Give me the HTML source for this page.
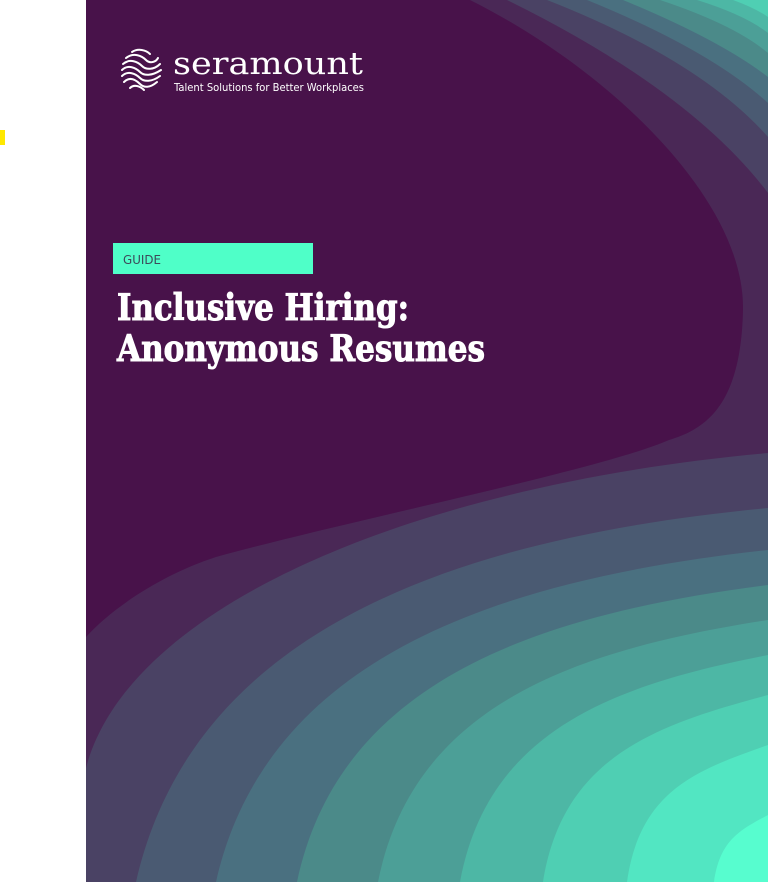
<!DOCTYPE html>
<html><head><meta charset="utf-8"><style>
html,body{margin:0;padding:0;background:#fff;width:768px;height:882px;overflow:hidden}
svg{position:absolute;left:0;top:0}
</style></head><body>
<svg width="768" height="882" viewBox="0 0 768 882" xmlns="http://www.w3.org/2000/svg">
<rect x="0" y="130" width="5" height="15" fill="#ffe800"/>
<rect x="86" y="0" width="682" height="882" fill="#48124a"/>
<g>
<path fill="#4a2856" d="M470,0 C610,70 745,200 743,310 C741,400 710,428 669,440 C600,470 350,520 216,557 C160,575 110,610 86,637 L86,900 L800,900 L800,-10 L470,-10 Z"/>
<path fill="#4a4264" d="M507,0 Q690,90 768,193 L800,193 L800,453 L768,453 C430,483 130,600 86,768 L86,900 L800,900 L800,-10 L507,-10 Z"/>
<path fill="#4a5a72" d="M547,0 Q700,60 768,137 L800,137 L800,508 L768,508 C452,538 193,631 136,882 L800,900 L800,-10 L547,-10 Z"/>
<path fill="#4a7080" d="M587,0 Q710,50 768,103 L800,103 L800,550 L768,550 C492,580 266,660 216,882 L800,900 L800,-10 L587,-10 Z"/>
<path fill="#4b8a89" d="M623,0 Q720,40 768,77 L800,77 L800,585 L768,585 C532,615 339,683 297,882 L800,900 L800,-10 L623,-10 Z"/>
<path fill="#4c9f97" d="M660,0 Q735,25 768,53 L800,53 L800,620 L768,620 C573,650 413,706 378,882 L800,900 L800,-10 L660,-10 Z"/>
<path fill="#4db7a5" d="M697,0 Q745,15 768,33 L800,33 L800,655 L768,655 C614,685 488,730 460,882 L800,900 L800,-10 L697,-10 Z"/>
<path fill="#4fcfb3" d="M733,0 Q755,8 768,17 L800,17 L800,695 L768,695 C655,725 563,757 543,882 L800,900 L800,-10 L733,-10 Z"/>
<path fill="#52e6c2" d="M768,745 C697,770 640,790 627,882 L800,900 L800,745 Z"/>
<path fill="#57fdcf" d="M768,815 C740,830 720,840 714,882 L800,900 L800,815 Z"/>
</g>
<g fill="none" stroke="#fff" stroke-width="2" stroke-linecap="round">
<path d="M132,52 C138,48 146,50 150,54"/>
<path d="M126,58 C134,52 142,56 146,60 C150,64 156,62 158,58"/>
<path d="M123,64 C130,58 138,62 142,66 C146,70 154,70 160,64"/>
<path d="M122,70 C128,64 136,68 140,72 C144,76 152,76 161,70"/>
<path d="M122,76 C128,70 136,74 140,78 C144,82 152,82 160,76"/>
<path d="M124,82 C130,76 136,80 140,84 C144,88 150,88 157,82"/>
<path d="M130,88 C134,84 140,86 144,90"/>
</g>
<text x="173" y="74" fill="#fff" font-family="'DejaVu Serif','Liberation Serif',serif" font-size="31" font-weight="300" textLength="190" lengthAdjust="spacingAndGlyphs">seramount</text>
<text x="174" y="91" fill="#fff" font-family="'DejaVu Sans','Liberation Sans',sans-serif" font-size="11" textLength="190" lengthAdjust="spacingAndGlyphs">Talent Solutions for Better Workplaces</text>
<rect x="113" y="243" width="200" height="31" fill="#4fffc8"/>
<text x="123" y="264" fill="#3c4a5a" font-family="'DejaVu Sans','Liberation Sans',sans-serif" font-size="12.5" textLength="38" lengthAdjust="spacingAndGlyphs">GUIDE</text>
<g fill="#fff" stroke="#fff" stroke-width="1" font-family="'DejaVu Serif','Liberation Serif',serif" font-weight="bold" font-size="36">
<text x="117" y="320" textLength="292" lengthAdjust="spacingAndGlyphs">Inclusive Hiring:</text>
<text x="117" y="361" textLength="368" lengthAdjust="spacingAndGlyphs">Anonymous Resumes</text>
</g>
</svg>
</body></html>
